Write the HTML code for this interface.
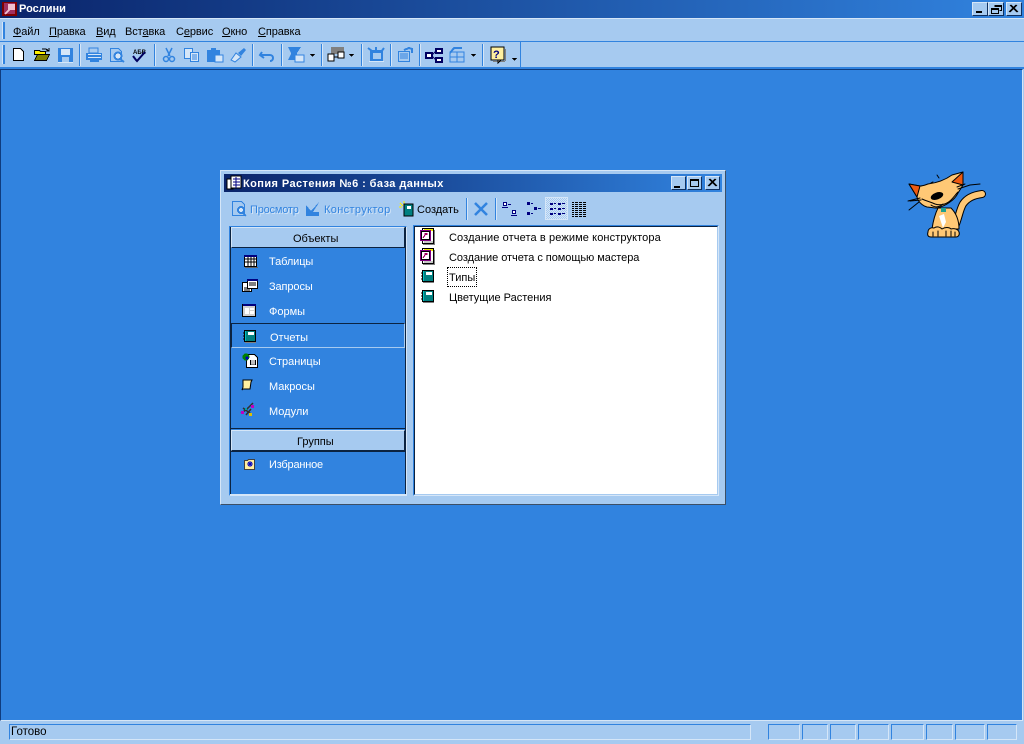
<!DOCTYPE html>
<html><head><meta charset="utf-8">
<style>
html,body{margin:0;padding:0;width:1024px;height:744px;overflow:hidden;background:#a6caf0}
body{position:relative;font-family:"Liberation Sans",sans-serif;font-size:11px;color:#000}
.a{position:absolute}
.t{position:absolute;white-space:nowrap;line-height:13px;font-size:11px}
.m{letter-spacing:-.1px}
.l{letter-spacing:.11px}
.w{color:#fff}
.g{color:#3183df;text-shadow:1px 1px 0 #d5e6f8}
.s{position:absolute;width:1px;background:#3183df;box-shadow:1px 0 0 #d5e6f8}
.b{position:absolute;background:#a6caf0;border:1px solid;border-color:#d5e6f8 #10305f #10305f #d5e6f8;box-sizing:border-box}
.st{position:absolute;top:724px;height:16px;box-sizing:border-box;border:1px solid;border-color:#3183df #d5e6f8 #d5e6f8 #3183df}
u{text-decoration:underline}
svg{position:absolute;left:0;top:0}
</style></head><body>
<!-- main title -->
<div class="a" style="left:0;top:0;width:1024px;height:18px;background:linear-gradient(90deg,#0a246a,#3183df)"></div>
<div class="t w" style="left:19px;top:3px;font-weight:bold">Рослини</div>
<!-- menu -->
<div class="a" style="left:0;top:18px;width:1024px;height:1px;background:#d5e6f8"></div>
<div class="a" style="left:0;top:41px;width:1024px;height:1px;background:#3183df"></div>
<div class="t m" style="left:13px;top:26px"><u>Ф</u>айл</div>
<div class="t m" style="left:49px;top:26px"><u>П</u>равка</div>
<div class="t m" style="left:96px;top:26px"><u>В</u>ид</div>
<div class="t m" style="left:125px;top:26px">Вст<u>а</u>вка</div>
<div class="t m" style="left:176px;top:26px">С<u>е</u>рвис</div>
<div class="t m" style="left:222px;top:26px"><u>О</u>кно</div>
<div class="t m" style="left:258px;top:26px"><u>С</u>правка</div>
<!-- toolbar lines -->
<div class="a" style="left:520px;top:42px;width:1px;height:26px;background:#3183df"></div>
<div class="a" style="left:0;top:67px;width:1024px;height:2px;background:#3183df"></div>
<div class="s" style="left:79px;top:44px;height:22px"></div>
<div class="s" style="left:154px;top:44px;height:22px"></div>
<div class="s" style="left:252px;top:44px;height:22px"></div>
<div class="s" style="left:281px;top:44px;height:22px"></div>
<div class="s" style="left:321px;top:44px;height:22px"></div>
<div class="s" style="left:361px;top:44px;height:22px"></div>
<div class="s" style="left:390px;top:44px;height:22px"></div>
<div class="s" style="left:419px;top:44px;height:22px"></div>
<div class="s" style="left:482px;top:44px;height:22px"></div>
<!-- desktop -->
<div class="a" style="left:0;top:69px;width:1023px;height:652px;background:#3183df;border-top:1px solid #0f3c7e;border-left:1px solid #0f3c7e;border-right:1px solid #d5e6f8;border-bottom:1px solid #d5e6f8;box-sizing:border-box"></div>
<!-- window buttons -->
<div class="b" style="left:972px;top:2px;width:16px;height:14px"></div>
<div class="b" style="left:988px;top:2px;width:16px;height:14px"></div>
<div class="b" style="left:1006px;top:2px;width:16px;height:14px"></div>
<!-- status -->
<div class="st" style="left:9px;width:742px"></div>
<div class="t" style="left:11px;top:726px;font-size:11.5px">Готово</div>
<div class="st" style="left:768px;width:32px"></div>
<div class="st" style="left:802px;width:26px"></div>
<div class="st" style="left:830px;width:26px"></div>
<div class="st" style="left:858px;width:31px"></div>
<div class="st" style="left:891px;width:33px"></div>
<div class="st" style="left:926px;width:27px"></div>
<div class="st" style="left:955px;width:30px"></div>
<div class="st" style="left:987px;width:30px"></div>
<!-- db window -->
<div class="a" style="left:220px;top:170px;width:506px;height:335px;box-sizing:border-box;background:#a6caf0;border:1px solid;border-color:#d5e6f8 #3c4f66 #3c4f66 #d5e6f8"></div>
<div class="a" style="left:224px;top:174px;width:498px;height:18px;background:linear-gradient(90deg,#0a246a,#3183df)"></div>
<div class="t w" style="left:243px;top:178px;font-weight:bold;letter-spacing:.42px">Копия Растения №6 : база данных</div>
<div class="b" style="left:671px;top:176px;width:15px;height:14px"></div>
<div class="b" style="left:687px;top:176px;width:15px;height:14px"></div>
<div class="b" style="left:705px;top:176px;width:15px;height:14px"></div>
<!-- db toolbar -->
<div class="t g" style="left:250px;top:204px;letter-spacing:-.2px">Просмотр</div>
<div class="t g" style="left:324px;top:204px;letter-spacing:.35px">Конструктор</div>
<div class="t" style="left:417px;top:204px">Создать</div>
<div class="s" style="left:466px;top:198px;height:22px"></div>
<div class="s" style="left:495px;top:198px;height:22px"></div>
<div class="a" style="left:545px;top:197px;width:23px;height:23px;box-sizing:border-box;border:1px solid #d5e6f8;background:repeating-conic-gradient(#d5e6f8 0 25%,#a6caf0 0 50%) 0 0/2px 2px"></div>
<!-- left panel -->
<div class="a" style="left:229px;top:226px;width:178px;height:270px;box-sizing:border-box;background:#3183df;border:1px solid;border-color:#3183df #d5e6f8 #d5e6f8 #3183df"></div>
<div class="a" style="left:405px;top:227px;width:1px;height:268px;background:#0b2341"></div>
<div class="a" style="left:230px;top:227px;width:1px;height:267px;background:#0b2341"></div>
<div class="a" style="left:230px;top:494px;width:176px;height:1px;background:#d5e6f8"></div>
<div class="b" style="left:231px;top:227px;width:174px;height:21px;border-color:#d5e6f8 #0b2341 #0b2341 #d5e6f8"></div>
<div class="t" style="left:293px;top:233px">Объекты</div>
<div class="t w" style="left:269px;top:256px;letter-spacing:-.1px">Таблицы</div>
<div class="t w" style="left:269px;top:281px;letter-spacing:-.1px">Запросы</div>
<div class="t w" style="left:269px;top:306px">Формы</div>
<div class="a" style="left:231px;top:323px;width:174px;height:25px;box-sizing:border-box;border:1px solid;border-color:#0b2341 #a6caf0 #a6caf0 #0b2341"></div>
<div class="t w" style="left:270px;top:332px">Отчеты</div>
<div class="t w" style="left:269px;top:356px">Страницы</div>
<div class="t w" style="left:269px;top:381px">Макросы</div>
<div class="t w" style="left:269px;top:406px">Модули</div>
<div class="a" style="left:231px;top:428px;width:174px;height:1px;background:#0b2341"></div>
<div class="b" style="left:231px;top:430px;width:174px;height:21px;border-color:#d5e6f8 #0b2341 #0b2341 #d5e6f8"></div>
<div class="a" style="left:231px;top:451px;width:174px;height:1px;background:#0b2341"></div>
<div class="t" style="left:297px;top:436px">Группы</div>
<div class="t w" style="left:269px;top:459px;letter-spacing:-.2px">Избранное</div>
<!-- right list -->
<div class="a" style="left:413px;top:225px;width:306px;height:271px;box-sizing:border-box;background:#fff;border:1px solid;border-color:#3183df #d5e6f8 #d5e6f8 #3183df"></div>
<div class="a" style="left:414px;top:226px;width:304px;height:269px;box-sizing:border-box;background:#fff;border:1px solid;border-color:#0b2341 #a6caf0 #a6caf0 #0b2341"></div>
<div class="t l" style="left:449px;top:232px">Создание отчета в режиме конструктора</div>
<div class="t" style="left:449px;top:252px;letter-spacing:-.05px">Создание отчета с помощью мастера</div>
<div class="a" style="left:447px;top:267px;width:30px;height:20px;box-sizing:border-box;border:1px dotted #000"></div>
<div class="t" style="left:449px;top:272px">Типы</div>
<div class="t" style="left:449px;top:292px">Цветущие Растения</div>

<svg width="1024" height="744" viewBox="0 0 1024 744" shape-rendering="crispEdges">
<defs>
<g id="rep"><rect x="3.500" y="0.500" width="11" height="15" fill="#fff" stroke="#000"/><rect x="5" y="1" width="9" height="2" fill="#f0e800"/><path d="M5 14h9" stroke="#909090"/><rect x="4" y="16" width="12" height="1" fill="#808080"/><rect x="15" y="2" width="1" height="15" fill="#808080"/><rect x="1" y="2" width="11" height="11" fill="#800080"/><rect x="2.500" y="3.500" width="8" height="8" fill="#fff" stroke="#000" stroke-width=".6"/><rect x="5.500" y="5" width="3" height="2" fill="#a00060"/><path d="M6 7L4 10" stroke="#a00060"/></g>
<g id="book"><rect x="1.500" y="0.500" width="11" height="11" fill="#008080" stroke="#000"/><rect x="2" y="1" width="1" height="10" fill="#00c0c0"/><rect x="5" y="2" width="6" height="3" fill="#fff"/><rect x="2" y="12" width="11" height="1" fill="#808080"/><path d="M0 3h2M0 6h2M0 9h2" stroke="#000"/></g>
<g id="dn"><path d="M0 0l5 0 -2.500 3z" fill="#000"/></g>
</defs>

<!-- main app icon -->
<rect x="2" y="2" width="15" height="14" fill="#800000"/>
<rect x="4" y="3" width="11" height="11" fill="#a03060"/>
<path d="M5 14l5-5M9 5h5v4h-5z" stroke="#f0c0d0" stroke-width="2" fill="#f0c0d0"/>

<!-- grips -->
<rect x="3" y="22" width="2" height="17" fill="#3183df"/><rect x="2" y="22" width="1" height="17" fill="#d5e6f8"/>
<rect x="3" y="45" width="2" height="19" fill="#3183df"/><rect x="2" y="45" width="1" height="19" fill="#d5e6f8"/>

<!-- window controls -->
<rect x="976" y="11" width="6" height="2" fill="#000"/>
<path d="M994.500 5.500h7v5h-2M994.500 6.500h7M991.500 8.500h7v5h-7zM991.500 9.500h7" fill="none" stroke="#000"/>
<path d="M1010 5l7 7m-1-7l-7 7M1011 5l7 7m-1-7l-7 7" stroke="#000" fill="none" shape-rendering="auto"/>

<!-- toolbar: new -->
<path d="M13.500 48.500h7l3 3v9h-10z" fill="#fff" stroke="#000"/>
<!-- open -->
<path d="M34.500 50.500h5l1 1h5v3h-11z" fill="#fff000" stroke="#000"/>
<path d="M34.500 60.500l3-6h12l-3 6z" fill="#808000" stroke="#000"/>
<path d="M42 49h4l3 2m0-3v3h-3" stroke="#000" fill="none"/>
<!-- save -->
<rect x="58" y="48" width="15" height="15" fill="#3183df"/><rect x="61" y="49" width="9" height="6" fill="#d5e6f8"/><rect x="62" y="57" width="7" height="6" fill="#a6caf0"/><rect x="58" y="62" width="15" height="1" fill="#d5e6f8"/>
<!-- print -->
<rect x="89" y="48" width="9" height="5" fill="#a6caf0" stroke="#3183df"/>
<rect x="86" y="53" width="16" height="7" fill="#3183df"/><rect x="88" y="54" width="13" height="1" fill="#d5e6f8"/><rect x="88" y="57" width="13" height="1" fill="#d5e6f8"/><rect x="90" y="60" width="9" height="2" fill="#3183df"/>
<!-- preview -->
<path d="M110.500 48.500h8l3 3v10h-11z" fill="#a6caf0" stroke="#3183df"/>
<circle cx="118" cy="56" r="3.500" fill="#d5e6f8" stroke="#3183df" stroke-width="2"/><path d="M120 59l4 3" stroke="#3183df" stroke-width="2" shape-rendering="auto"/>
<!-- spell -->
<text x="133" y="54" font-family="Liberation Sans" font-size="6" font-weight="bold" fill="#000">АБВ</text>
<path d="M133 56l3 4 1 1 8-9" stroke="#000060" stroke-width="2" fill="none" shape-rendering="auto"/>
<!-- cut -->
<path d="M166 48l4 8M172 48l-4 8" stroke="#3183df" stroke-width="1.500" shape-rendering="auto"/>
<circle cx="166" cy="59" r="2.500" fill="none" stroke="#3183df" stroke-width="1.500" shape-rendering="auto"/><circle cx="172" cy="59" r="2.500" fill="none" stroke="#3183df" stroke-width="1.500" shape-rendering="auto"/>
<!-- copy -->
<path d="M184.500 48.500h8v10h-8z" fill="#d5e6f8" stroke="#3183df"/><path d="M190.500 52.500h8v9h-8z" fill="#d5e6f8" stroke="#3183df"/><path d="M192 55h5M192 57h5M192 59h5" stroke="#3183df"/>
<!-- paste -->
<rect x="207" y="50" width="13" height="12" fill="#3183df"/><rect x="211" y="48" width="5" height="3" fill="#3183df"/><rect x="215" y="55" width="8" height="7" fill="#d5e6f8" stroke="#3183df"/>
<!-- brush -->
<path d="M231 60l5-7 5 4-6 5z" fill="#d5e6f8" stroke="#3183df" shape-rendering="auto"/><path d="M238 53l6-5 2 2-5 6z" fill="#3183df" shape-rendering="auto"/>
<!-- undo -->
<path d="M262 52l-2 3 4 3M261 55h9c4 0 4 6 0 6" fill="none" stroke="#3183df" stroke-width="2" shape-rendering="auto"/>
<!-- analyze -->
<path d="M288 47h13l-4 6 v1l3 6h-12l3-6v-1z" fill="#3183df"/><rect x="295" y="55" width="9" height="7" fill="#d5e6f8" stroke="#3183df"/>
<use href="#dn" x="310" y="54"/>
<!-- obj -->
<rect x="331" y="47" width="13" height="7" fill="#808080"/><rect x="328" y="54" width="6" height="7" fill="#fff" stroke="#000"/><rect x="338" y="52" width="6" height="6" fill="#fff" stroke="#000"/><path d="M334 57h4" stroke="#000"/>
<use href="#dn" x="349" y="54"/>
<!-- 368 -->
<rect x="370" y="50" width="13" height="11" fill="#3183df"/><rect x="373" y="53" width="8" height="6" fill="#a6caf0"/><path d="M368 48l4 3M384 48l-3 4M376 47v3" stroke="#3183df" stroke-width="2" shape-rendering="auto"/><rect x="369" y="61" width="15" height="1" fill="#d5e6f8"/>
<!-- 397 -->
<path d="M398.500 51.500h11v10h-11z" fill="#a6caf0" stroke="#3183df"/><path d="M400 54h8M400 56h8M400 58h8" stroke="#3183df"/><path d="M404 50l5-2 3 1v4" stroke="#3183df" fill="none" stroke-width="2"/>
<!-- relationships -->
<rect x="426" y="53" width="6" height="5" fill="#fff" stroke="#000060" stroke-width="2"/><rect x="436" y="49" width="6" height="4" fill="#fff" stroke="#000060" stroke-width="2"/><rect x="436" y="58" width="6" height="4" fill="#fff" stroke="#000060" stroke-width="2"/><path d="M432 55l4-4M432 56l4 4" stroke="#000060" shape-rendering="auto"/>
<!-- 449 -->
<rect x="450" y="52" width="14" height="10" fill="#a6caf0" stroke="#3183df"/><path d="M457 52v10M450 57h14" stroke="#3183df"/><path d="M450 53l4-5h8" stroke="#3183df" fill="none" stroke-width="2"/>
<use href="#dn" x="471" y="54"/>
<!-- help -->
<rect x="491" y="47" width="13" height="13" fill="#fff0a0" stroke="#000"/><rect x="505" y="49" width="1" height="12" fill="#808080"/><rect x="493" y="61" width="12" height="1" fill="#808080"/>
<text x="493" y="58" font-family="Liberation Sans" font-size="11" font-weight="bold" fill="#000080">?</text>
<path d="M498 60v3l3-3z" fill="#fff" stroke="#000"/>
<use href="#dn" x="512" y="58"/>

<!-- db window icon -->
<rect x="227" y="179" width="6" height="10" fill="#fff" stroke="#000"/><rect x="231" y="176" width="10" height="12" fill="#fff" stroke="#000"/><path d="M233 179h7M233 182h7M233 185h7M236 177v11" stroke="#000080"/>
<path d="M674 186h6v2h-6z" fill="#000"/>
<path d="M690.500 179.500h8v7h-8zM690.500 180.500h8" fill="none" stroke="#000"/>
<path d="M709 179l7 7m-1-7l-7 7M710 179l7 7m-1-7l-7 7" stroke="#000" fill="none" shape-rendering="auto"/>

<!-- db toolbar icons -->
<path d="M232.500 201.500h9l3 3v11h-12z" fill="#a6caf0" stroke="#3183df"/><circle cx="241" cy="210" r="3" fill="#d5e6f8" stroke="#3183df" stroke-width="2"/><path d="M243 213l3 3" stroke="#3183df" stroke-width="2"/>
<path d="M306 215v-10l5 6 9-10-7 11 6 0 0 4h-13z" fill="#3183df"/>
<path d="M400 203l3 3M404 201v4M399 207h3" stroke="#fff000" stroke-width="1"/>
<rect x="404" y="204" width="9" height="12" fill="#008080" stroke="#000"/><rect x="407" y="206" width="4" height="3" fill="#fff"/>
<path d="M475 203l12 12M487 203l-12 12" stroke="#3183df" stroke-width="2.500" shape-rendering="auto"/>
<!-- view icons -->
<g fill="#000080">
<rect x="503.500" y="202.500" width="3" height="3" fill="#fff" stroke="#000080"/><rect x="508" y="204" width="3" height="1"/><rect x="512.500" y="210.500" width="3" height="3" fill="#fff" stroke="#000080"/><rect x="502" y="207" width="6" height="1"/><rect x="511" y="215" width="6" height="1"/>
<rect x="527" y="202" width="3" height="3"/><rect x="531" y="203" width="2" height="1"/><rect x="534" y="207" width="3" height="3"/><rect x="538" y="208" width="3" height="1"/><rect x="527" y="212" width="3" height="3"/><rect x="531" y="213" width="2" height="1"/>
<rect x="550" y="203" width="3" height="2"/><rect x="554" y="203" width="2" height="1"/><rect x="558" y="203" width="3" height="2"/><rect x="562" y="203" width="3" height="1"/>
<rect x="550" y="208" width="3" height="2"/><rect x="554" y="208" width="2" height="1"/><rect x="558" y="208" width="3" height="2"/><rect x="562" y="208" width="3" height="1"/>
<rect x="550" y="213" width="3" height="2"/><rect x="554" y="213" width="2" height="1"/><rect x="558" y="213" width="3" height="2"/><rect x="562" y="213" width="3" height="1"/>
</g>
<g fill="#000">
<rect x="572" y="202" width="14" height="1"/><rect x="572" y="204" width="14" height="1"/><rect x="572" y="206" width="14" height="1"/><rect x="572" y="208" width="14" height="1"/><rect x="572" y="210" width="14" height="1"/><rect x="572" y="212" width="14" height="1"/><rect x="572" y="214" width="14" height="1"/><rect x="572" y="216" width="14" height="1"/>
<rect x="574" y="202" width="1" height="15" fill="#a6caf0"/><rect x="578" y="202" width="1" height="15" fill="#a6caf0"/><rect x="582" y="202" width="1" height="15" fill="#a6caf0"/>
</g>

<!-- list icons -->
<use href="#rep" x="419" y="228"/>
<use href="#rep" x="419" y="248"/>
<use href="#book" x="421" y="270"/>
<use href="#book" x="421" y="290"/>

<!-- left panel icons -->
<rect x="244.500" y="255.500" width="12" height="11" fill="#fff" stroke="#000"/><rect x="244" y="255" width="13" height="2" fill="#000080"/><path d="M245 259h11M245 262h11M248 257v9M251 257v9M254 257v9" stroke="#000"/><rect x="245" y="267" width="13" height="1" fill="#606060"/>
<rect x="242.500" y="282.500" width="9" height="9" fill="#fff" stroke="#000"/><rect x="247.500" y="279.500" width="10" height="9" fill="#fff" stroke="#000"/><rect x="247" y="279" width="11" height="2" fill="#000080"/><path d="M249 283h7M249 285h7M244 288h3M244 290h6" stroke="#000"/>
<rect x="242.500" y="304.500" width="13" height="12" fill="#d0d0d0" stroke="#000"/><rect x="243" y="304" width="13" height="2" fill="#000080"/><rect x="245" y="308" width="4" height="6" fill="#fff"/><rect x="250" y="308" width="4" height="2" fill="#fff"/><rect x="250" y="311" width="4" height="3" fill="#fff"/>
<use href="#book" x="243" y="330"/>
<path d="M246.500 354.500h8l3 3v10h-11z" fill="#fff" stroke="#000"/><circle cx="246" cy="357" r="3.500" fill="#008000"/><circle cx="247" cy="358" r="1.500" fill="#0000c0"/><rect x="250" y="360" width="6" height="5" fill="#000"/><path d="M251 361h4M251 363h4M252 360v5M254 360v5" stroke="#fff"/>
<path d="M243 380h9l-1 2-1 7h-7l-1 1 1-3z" fill="#fff0a0" stroke="#000" shape-rendering="auto"/>
<path d="M241 413l5-3 4-4 3-3M243 408l8 6M246 415l5-6" stroke="#303030" stroke-width="1.500" shape-rendering="auto"/><rect x="241" y="411" width="3" height="3" fill="#c000c0"/><rect x="251" y="405" width="3" height="3" fill="#c000c0"/><rect x="249" y="413" width="3" height="3" fill="#e0c000"/><rect x="245" y="408" width="2" height="2" fill="#00a0a0"/>
<path d="M244.500 460.500h3l1-1h6v10h-10z" fill="#fff0a0" stroke="#404040"/><path d="M247 464h6M250 461v6M248 462l4 4M252 462l-4 4" stroke="#0000c0" shape-rendering="auto"/>

<!-- cat -->
<g shape-rendering="auto" stroke-linejoin="round" stroke-linecap="round">
<path d="M956 224c3-8 4-15 7-20 4-6 11-9 19-10" fill="none" stroke="#000" stroke-width="8"/>
<path d="M956 224c3-8 4-15 7-20 4-6 11-9 19-10" fill="none" stroke="#ffc875" stroke-width="6"/>
<path d="M938 208c-3 6-5 14-6 21h27c0-7-2-15-8-21z" fill="#ffc875" stroke="#000"/>
<path d="M939 216l4 12 3-6-2-8z" fill="#fff"/>
<path d="M928 232c0-3 3-5 6-4 3-2 6-1 8 1 3-2 7-2 9 0 3-1 7 0 8 3 1 3-1 5-3 5h-25c-3 0-4-2-3-5z" fill="#ffc875" stroke="#000"/>
<path d="M933 232v4M938 231v5M946 231v5M951 231v5M955 232v4" stroke="#000"/>
<path d="M909 184l11 2c3 0 5-1 8-2 8-1 17-4 24-9l11-3v13l-5 8c-2 4-5 7-8 9-4 3-9 5-13 6-4 0-8-1-10-1-4-1-7-4-9-7l-1-3z" fill="#ffc875" stroke="#000"/>
<path d="M909 184l11 2-3 11z" fill="#ee5a10" stroke="#000"/>
<path d="M952 182l11-10 0 13z" fill="#ee5a10" stroke="#000"/>
<ellipse cx="937" cy="196" rx="6.500" ry="3.500" fill="#000" transform="rotate(-20 937 196)"/>
<path d="M922 199c4 2 9 3 13 5 6 2 12 0 16-4 3-3 5-6 7-8" fill="none" stroke="#000"/>
<path d="M931 205c4 3 9 2 12-1" fill="none" stroke="#000"/>
<path d="M920 198l-12 3M921 200l-11 1M919 202l-10 8M958 189l12-4 10-1M957 187l8-3M939 178l-2-3M931 183l2-1" fill="none" stroke="#000"/>
<rect x="941" y="208" width="5" height="4" fill="#20a090"/>
</g>
</svg>
</body></html>
